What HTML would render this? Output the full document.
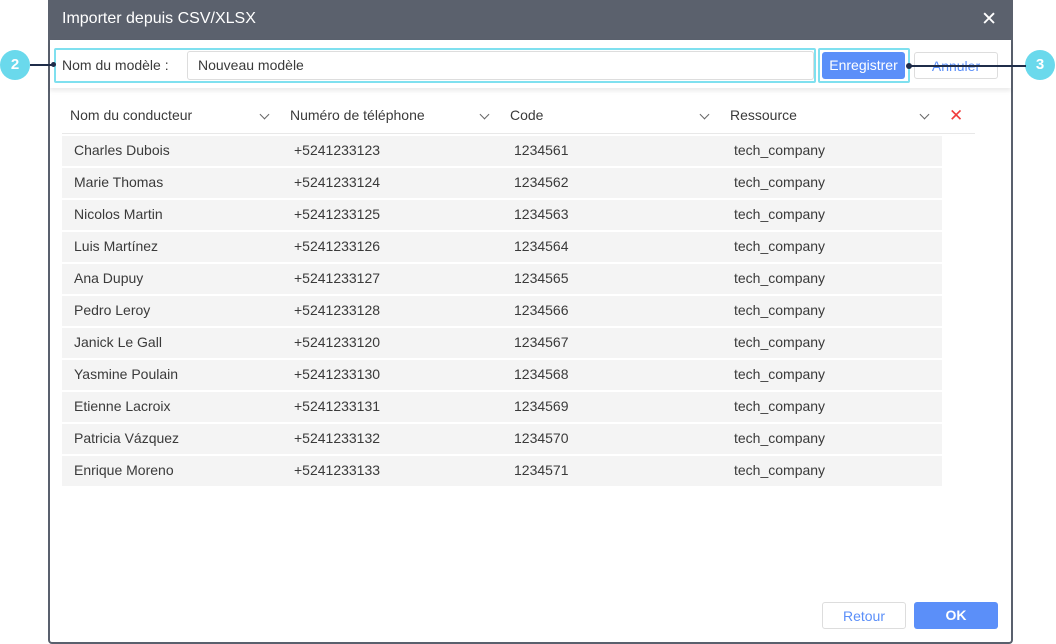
<!DOCTYPE html>
<html><head><style>
*{box-sizing:border-box;margin:0;padding:0}
body{width:1056px;height:644px;background:#fff;font-family:"Liberation Sans",Arial,sans-serif;position:relative;overflow:hidden;color:#3a3a3a}
.dlg{position:absolute;left:48px;top:0;width:965px;height:644px;border:2px solid #59606d;border-top:none;border-radius:4px;background:#fff}
.hd{position:absolute;left:-2px;top:0;right:-2px;height:40px;background:#5b616d;color:#fff;font-size:16px;padding:10px 14px}
.x{position:absolute;right:16px;top:8px;font-size:19px;color:#fff;font-weight:300}
.bar{position:absolute;left:0;right:0;top:40px;height:48px;box-shadow:0 3px 4px rgba(0,0,0,.08)}
.abs{position:absolute}
.row{position:absolute;left:12px;width:880px;height:30px;background:#f4f4f4;font-size:14px}
.row span,.th span{position:absolute;top:6px}
.th{position:absolute;top:101px;left:12px;width:913px;height:33px;border-bottom:1px solid #e8e8e8;font-size:14px}
.chev{position:absolute;top:10px;width:7px;height:7px;border-right:1.5px solid #666;border-bottom:1.5px solid #666;transform:rotate(45deg)}
.circ{position:absolute;width:30px;height:30px;border-radius:50%;background:#6ad9ec;color:#fff;font-weight:bold;font-size:15px;text-align:center;line-height:30px}
.btn{position:absolute;height:27px;border-radius:3px;font-size:14px;text-align:center;line-height:27px}
</style></head><body>
<div class="dlg">
<div class="hd">Importer depuis CSV/XLSX<span class="x">✕</span></div>
<div class="bar"></div>
<div class="abs" style="left:4px;top:48px;width:762px;height:35px;border:2px solid #7fe0ef;border-radius:2px"></div>
<div class="abs" style="left:12px;top:57px;font-size:14px">Nom du modèle :</div>
<div class="abs" style="left:137px;top:51px;width:627px;height:29px;border:1px solid #ddd;border-radius:3px;font-size:14px;padding:5px 10px">Nouveau modèle</div>
<div class="abs" style="left:768px;top:48px;width:92px;height:35px;border:2px solid #7fe0ef;border-radius:2px"></div>
<div class="btn" style="left:772px;top:52px;width:83px;background:#5b8ff9;color:#fff">Enregistrer</div>
<div class="btn" style="left:864px;top:52px;width:84px;border:1px solid #ddd;color:#5b8ff9">Annuler</div>
<div class="th">
<span style="left:8px">Nom du conducteur</span><i class="chev" style="left:199px"></i>
<span style="left:228px">Numéro de téléphone</span><i class="chev" style="left:419px"></i>
<span style="left:448px">Code</span><i class="chev" style="left:639px"></i>
<span style="left:668px">Ressource</span><i class="chev" style="left:859px"></i>
<span style="left:887px;top:5px;color:#f03c3c;font-size:17px">✕</span>
</div>
<div class="row" style="top:136px"><span style="left:12px">Charles Dubois</span><span style="left:232px">+5241233123</span><span style="left:452px">1234561</span><span style="left:672px">tech_company</span></div>
<div class="row" style="top:168px"><span style="left:12px">Marie Thomas</span><span style="left:232px">+5241233124</span><span style="left:452px">1234562</span><span style="left:672px">tech_company</span></div>
<div class="row" style="top:200px"><span style="left:12px">Nicolos Martin</span><span style="left:232px">+5241233125</span><span style="left:452px">1234563</span><span style="left:672px">tech_company</span></div>
<div class="row" style="top:232px"><span style="left:12px">Luis Martínez</span><span style="left:232px">+5241233126</span><span style="left:452px">1234564</span><span style="left:672px">tech_company</span></div>
<div class="row" style="top:264px"><span style="left:12px">Ana Dupuy</span><span style="left:232px">+5241233127</span><span style="left:452px">1234565</span><span style="left:672px">tech_company</span></div>
<div class="row" style="top:296px"><span style="left:12px">Pedro Leroy</span><span style="left:232px">+5241233128</span><span style="left:452px">1234566</span><span style="left:672px">tech_company</span></div>
<div class="row" style="top:328px"><span style="left:12px">Janick Le Gall</span><span style="left:232px">+5241233120</span><span style="left:452px">1234567</span><span style="left:672px">tech_company</span></div>
<div class="row" style="top:360px"><span style="left:12px">Yasmine Poulain</span><span style="left:232px">+5241233130</span><span style="left:452px">1234568</span><span style="left:672px">tech_company</span></div>
<div class="row" style="top:392px"><span style="left:12px">Etienne Lacroix</span><span style="left:232px">+5241233131</span><span style="left:452px">1234569</span><span style="left:672px">tech_company</span></div>
<div class="row" style="top:424px"><span style="left:12px">Patricia Vázquez</span><span style="left:232px">+5241233132</span><span style="left:452px">1234570</span><span style="left:672px">tech_company</span></div>
<div class="row" style="top:456px"><span style="left:12px">Enrique Moreno</span><span style="left:232px">+5241233133</span><span style="left:452px">1234571</span><span style="left:672px">tech_company</span></div>
<div class="btn" style="left:772px;top:602px;width:84px;border:1px solid #ddd;color:#5b8ff9">Retour</div>
<div class="btn" style="left:864px;top:602px;width:84px;background:#5b8ff9;color:#fff;font-weight:bold">OK</div>
</div>
<div class="circ" style="left:0;top:50px">2</div>
<div class="abs" style="left:30px;top:64px;width:24px;height:2px;background:#1f2d4a"></div>
<div class="abs" style="left:51px;top:62px;width:5px;height:5px;border-radius:50%;background:#1f2d4a"></div>
<div class="circ" style="left:1025px;top:50px">3</div>
<div class="abs" style="left:909px;top:65px;width:117px;height:2px;background:#1f2d4a"></div>
<div class="abs" style="left:906px;top:63px;width:6px;height:6px;border-radius:50%;background:#1f2d4a"></div>
</body></html>
